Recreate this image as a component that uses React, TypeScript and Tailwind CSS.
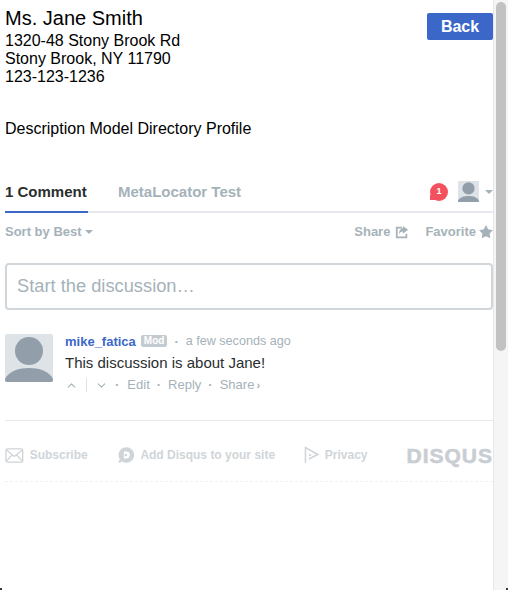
import { ChevronDown, ChevronUp, Star } from "lucide-react";

function Avatar({ className }: { className: string }) {
  return (
    <svg viewBox="0 0 48 48" className={className}>
      <rect width="48" height="48" rx="2" fill="#dde3e7" />
      <circle cx="24" cy="17" r="14" fill="#929eaa" />
      <path d="M0 45 C4 37 14 34 24 34 C34 34 44 37 48 45 L48 46 A2 2 0 0 1 46 48 L2 48 A2 2 0 0 1 0 46 Z" fill="#929eaa" />
    </svg>
  );
}

function Caret({ className = "" }: { className?: string }) {
  return <span className={`inline-block h-0 w-0 border-x-[4px] border-t-[4px] border-x-transparent ${className}`} />;
}

function Dot() {
  return <span className="text-[13px] font-bold text-[#a5b2b9]">·</span>;
}

function CommentThread() {
  return (
    <section className="mt-[38px] font-['Liberation_Sans',sans-serif]">
      <div className="flex h-[37px] items-start border-b-2 border-[#e7e9ee]">
        <div className="h-[37px] w-[83px] border-b-2 border-[#3b68c8] pt-[6px] text-[15px] leading-[20px] font-bold whitespace-nowrap text-[#2a2e2e]">
          1 Comment
        </div>
        <div className="ml-[30px] pt-[6px] text-[15px] leading-[20px] font-bold whitespace-nowrap text-[#a5b2b9]">MetaLocator Test</div>
        <div className="ml-auto flex items-center pt-[5px]">
          <span className="relative flex h-[18px] w-[18px] items-center justify-center rounded-full bg-[#f4515f] text-[9px] font-bold text-white">
            1
            <span className="absolute bottom-[1px] left-0 h-[5px] w-[5px] bg-[#f4515f]" />
          </span>
          <Avatar className="ml-[10px] h-[21px] w-[21px]" />
          <Caret className="ml-[6px] border-t-[#a5b2b9]" />
        </div>
      </div>

      <div className="flex h-[37px] items-center text-[13px] font-bold text-[#a5b2b9]">
        <span>Sort by Best</span>
        <Caret className="ml-[3px] border-t-[#a5b2b9]" />
        <span className="ml-auto">Share</span>
        <svg viewBox="0 0 16 16" className="ml-[5px] h-[14px] w-[14px]" fill="#a5b2b9">
          <path d="M1 2h7v2H3v9h9v-3h2v5H1z" />
          <path d="M9 1l6 4.5L9 10V7.5C7 7.5 5.5 8.5 4.5 10.5 4.5 7 6 4 9 3.5z" />
        </svg>
        <span className="ml-[16px]">Favorite</span>
        <Star className="mr-[-1px] ml-[2px] h-[16px] w-[16px]" fill="#a5b2b9" strokeWidth={0} />
      </div>

      <div className="mt-[13px] flex h-[47px] items-center rounded-[4px] border-2 border-[#d0d6d9] pb-[2px] pl-[10px] text-[18.3px] text-[#a5b2b9]">
        Start the discussion…
      </div>

      <div className="mt-[24px] flex">
        <Avatar className="h-[48px] w-[48px] shrink-0" />
        <div className="ml-[12px]">
          <div className="flex h-[14px] items-center text-[13px] leading-none whitespace-nowrap">
            <span className="font-bold text-[#3b68c8]">mike_fatica</span>
            <span className="ml-[5px] rounded-[2px] bg-[#c4cbd0] px-[3px] text-[10px] leading-[12px] font-bold text-white">Mod</span>
            <span className="ml-[7px]">
              <Dot />
            </span>
            <span className="ml-[7px] text-[12.6px] text-[#a5b2b9]">a few seconds ago</span>
          </div>
          <p className="mt-[4px] text-[15px] leading-[21px] text-[#2a2e2e]">This discussion is about Jane!</p>
          <div className="mt-[3px] flex h-[18px] items-center text-[13px] text-[#a5b2b9]">
            <ChevronUp className="h-[13px] w-[13px]" strokeWidth={2} />
            <span className="mx-[8px] h-[14px] w-[1px] bg-[#dfe3e6]" />
            <ChevronDown className="h-[13px] w-[13px]" strokeWidth={2} />
            <span className="mr-[8px] ml-[7px]">
              <Dot />
            </span>
            <span>Edit</span>
            <span className="mx-[7px]">
              <Dot />
            </span>
            <span>Reply</span>
            <span className="mx-[7px]">
              <Dot />
            </span>
            <span>Share</span>
            <span className="ml-[2px] text-[11px] font-bold">›</span>
          </div>
        </div>
      </div>

      <div className="mt-[26px] flex h-[62px] items-center overflow-hidden border-y border-t-[#e7e9ee] border-b-[#eff1f3] pt-[8px] [border-bottom-style:dashed] text-[12px] font-bold whitespace-nowrap text-[#d0d5d9]">
        <svg viewBox="0 0 20 16" className="h-[15px] w-[19px]" fill="none" stroke="#cfd4d8" strokeWidth="1.4">
          <rect x="1" y="1" width="18" height="14" rx="1.5" />
          <path d="M1.5 2l8.5 7 8.5-7M1.5 14l6-6.5M18.5 14l-6-6.5" />
        </svg>
        <span className="ml-[6px]">Subscribe</span>
        <svg viewBox="0 0 18 18" className="ml-[29px] h-[18px] w-[18px]">
          <circle cx="9.5" cy="9" r="8" fill="#cfd4d8" />
          <path d="M3 13l-2 4 4-1z" fill="#cfd4d8" />
          <path d="M7 5.5h2.5a3.5 3.5 0 0 1 0 7H7z" fill="#fff" />
          <circle cx="9" cy="9" r="1.3" fill="#cfd4d8" />
        </svg>
        <span className="ml-[6px]">Add Disqus to your site</span>
        <svg viewBox="0 0 16 18" className="ml-[29px] h-[18px] w-[16px]" fill="none" stroke="#cfd4d8" strokeWidth="1.6">
          <path d="M1.5 17V1.5L14 8.5 5 13" />
          <path d="M5 7.5l3 1.5-3 1.5z" fill="#cfd4d8" stroke="none" />
        </svg>
        <span className="ml-[5px]">Privacy</span>
        <span className="ml-[39px] text-[21px] leading-none font-black tracking-[1px] text-[#c9ced3] [-webkit-text-stroke:0.6px_#c9ced3]">DISQUS</span>
      </div>
    </section>
  );
}

export default function App() {
  return (
    <div className="relative flex h-[590px] w-[508px] overflow-hidden bg-white font-['Liberation_Sans',sans-serif] text-black">
      <main className="w-[493px] shrink-0 overflow-hidden pt-[7px] pl-[5px]">
        <div className="flex items-start justify-between">
          <div>
            <h1 className="mb-[3px] text-[20px] leading-[22px]">Ms. Jane Smith</h1>
            <p className="text-[16px] leading-[18px]">
              1320-48 Stony Brook Rd
              <br />
              Stony Brook, NY 11790
              <br />
              123-123-1236
            </p>
          </div>
          <button className="mt-[6px] h-[27px] w-[66px] rounded-[2px] bg-[#3b68c8] text-[16px] font-bold text-white">Back</button>
        </div>
        <p className="mt-[34px] text-[16px] leading-[18px]">Description Model Directory Profile</p>
        <CommentThread />
      </main>
      <aside className="flex-1 border-l border-[#e8e8e8] bg-[#f5f5f5] pt-[2px] pl-[2px]">
        <div className="h-[349px] w-[10px] rounded-[5px] bg-[#c2c2c2]" />
      </aside>
      <span className="absolute bottom-0 left-0 h-[2px] w-[2px] bg-[#2f3b46]" />
      <span className="absolute right-0 bottom-0 h-[2px] w-[2px] bg-[#2f3b46]" />
    </div>
  );
}
